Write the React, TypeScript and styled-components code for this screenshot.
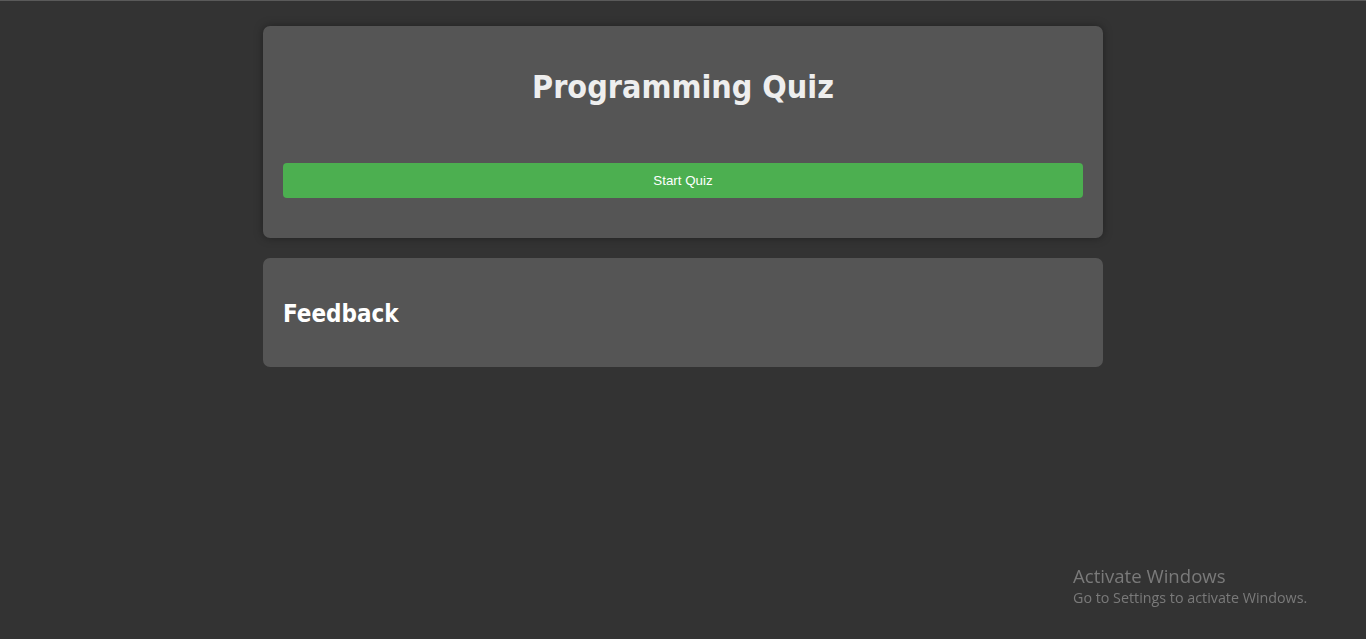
import React from "react";
import styled, { createGlobalStyle } from "styled-components";

const Global = createGlobalStyle`
  html, body { margin: 0; padding: 0; }
  body {
    background: #333333;
    font-family: "DejaVu Sans", Verdana, sans-serif;
    color: #eeeeee;
    min-height: 639px;
    border-top: 1px solid #5a5a5a;
    box-sizing: border-box;
  }
`;

const Page = styled.main`
  width: 840px;
  margin: 25px auto 0;
  display: flex;
  flex-direction: column;
  gap: 20px;
`;

const Card = styled.section<{ $shadow?: boolean }>`
  background: #555555;
  border-radius: 7px;
  padding: 20px;
  box-shadow: ${(p) => (p.$shadow ? "0 0 10px rgba(0,0,0,0.35)" : "none")};
`;

const Title = styled.h1`
  margin: 21px 0 0;
  text-align: center;
  font-family: "DejaVu Sans Condensed", "DejaVu Sans", sans-serif;
  font-weight: bold;
  font-size: 32px;
  line-height: 40px;
  color: #eeeeee;
`;

const StartButton = styled.button`
  display: block;
  width: 100%;
  height: 35px;
  margin: 56px 0 20px;
  border: none;
  border-radius: 4px;
  background: #4caf50;
  color: #ffffff;
  font-family: "Liberation Sans", Arial, sans-serif;
  font-size: 13.33px;
  cursor: pointer;
`;

const SectionTitle = styled.h2`
  margin: 22px 0 19px;
  font-family: "DejaVu Sans Condensed", "DejaVu Sans", sans-serif;
  font-weight: bold;
  font-size: 24px;
  line-height: 28px;
  color: #ffffff;
`;

const Watermark = styled.div`
  position: fixed;
  left: 1073px;
  top: 564px;
  font-family: "Open Sans", "Noto Sans", sans-serif;
  color: #7a7a7a;
`;

const WmTitle = styled.div`
  font-size: 18.6px;
  line-height: 24px;
`;

const WmSub = styled.div`
  font-size: 14.3px;
  line-height: 20px;
`;

export default function App() {
  return (
    <>
      <Global />
      <Page>
        <Card $shadow>
          <Title>Programming Quiz</Title>
          <StartButton>Start Quiz</StartButton>
        </Card>
        <Card>
          <SectionTitle>Feedback</SectionTitle>
        </Card>
      </Page>
      <Watermark>
        <WmTitle>Activate Windows</WmTitle>
        <WmSub>Go to Settings to activate Windows.</WmSub>
      </Watermark>
    </>
  );
}
